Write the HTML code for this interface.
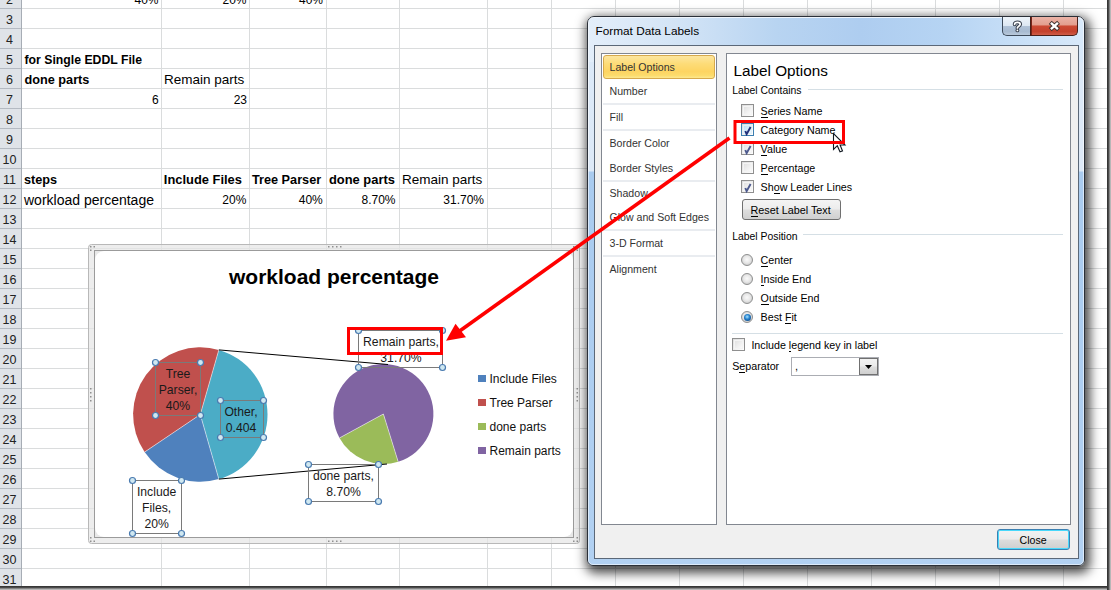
<!DOCTYPE html>
<html><head><meta charset="utf-8"><style>
*{margin:0;padding:0;box-sizing:border-box}
body{width:1111px;height:590px;overflow:hidden;position:relative;background:#fff;font-family:"Liberation Sans",sans-serif;color:#000}
.abs{position:absolute}
#hdr{position:absolute;left:0;top:0;width:21px;height:586px;background:#dfe3e8}
.rn{position:absolute;left:-1.5px;margin-top:2px;width:22px;height:20px;text-align:center;font-size:12.5px;line-height:20px;color:#222}
.t{position:absolute;white-space:nowrap;font-size:13.5px;line-height:20px;margin-top:1px}
.b{font-weight:bold;font-size:12.7px}
.r{text-align:right}
.cl{position:absolute;text-align:center;white-space:nowrap;color:#1a1a1a}

#dlg{position:absolute;left:587px;top:16px;width:498px;height:550px;border:1px solid #2b3038;border-radius:7px 7px 6px 6px;
 background:linear-gradient(180deg,#dbe9f8 0px,#dde9f7 154px,#a9cbef 155px,#b2d1f2 549px);
 box-shadow:2px 4px 11px 3px rgba(0,0,0,0.72)}
#dlg .hl{position:absolute;left:0;top:0;right:0;bottom:0;border:1px solid rgba(255,255,255,0.55);border-radius:6px 6px 5px 5px}
#tbar{position:absolute;left:1px;top:1px;width:494px;height:44px;border-radius:6px 6px 0 0;background:linear-gradient(90deg,#e3eefa 0%,#d3e4f6 18%,#b8d4f1 38%,#aecdf0 55%,#b6d4f3 72%,#c9e0f7 88%,#d8e9fa 100%)}
#ttl{position:absolute;left:595.5px;top:23px;font-size:11.8px;line-height:16px;color:#000;white-space:nowrap}
#client{position:absolute;left:594px;top:45px;width:485px;height:514px;background:#f0f0f0;border:1px solid #5b6878}
.dt{position:absolute;white-space:nowrap;font-size:10.7px;line-height:14px;color:#000}
.li{position:absolute;left:609.5px;white-space:nowrap;font-size:10.6px;line-height:14px;color:#333}
.sep{position:absolute;left:603px;width:112px;height:2px;background:#e9ecf0}
.cb{position:absolute;width:13px;height:13px;border:1px solid #8f8f8f;background:linear-gradient(135deg,#dcdcdc,#ffffff)}
.cb.hot::after{background:linear-gradient(135deg,#bfe0f6,#eef7fd);border-color:#def0fb}
.cb::after{content:"";position:absolute;left:1px;top:1px;right:1px;bottom:1px;border:1px solid #f4f4f4;background:linear-gradient(135deg,#e2e2e2,#fafafa)}
.rb{position:absolute;width:12px;height:12px;border-radius:50%;border:1px solid #8e8f8f;background:radial-gradient(circle at 50% 45%,#fafafa 0%,#e8e8e8 45%,#cfcfcf 75%,#f2f2f2 100%)}
u{text-decoration:none;border-bottom:1px solid currentColor}
</style></head><body>
<div id="hdr"></div>
<svg class="abs" style="left:0;top:0" width="1111" height="590">
<g stroke="#dadcdd" stroke-width="1"><line x1="22" y1="8.5" x2="1107" y2="8.5"/><line x1="22" y1="28.5" x2="1107" y2="28.5"/><line x1="22" y1="48.5" x2="1107" y2="48.5"/><line x1="22" y1="68.5" x2="1107" y2="68.5"/><line x1="22" y1="88.5" x2="1107" y2="88.5"/><line x1="22" y1="108.5" x2="1107" y2="108.5"/><line x1="22" y1="128.5" x2="1107" y2="128.5"/><line x1="22" y1="148.5" x2="1107" y2="148.5"/><line x1="22" y1="168.5" x2="1107" y2="168.5"/><line x1="22" y1="188.5" x2="1107" y2="188.5"/><line x1="22" y1="208.5" x2="1107" y2="208.5"/><line x1="22" y1="228.5" x2="1107" y2="228.5"/><line x1="22" y1="248.5" x2="1107" y2="248.5"/><line x1="22" y1="268.5" x2="1107" y2="268.5"/><line x1="22" y1="288.5" x2="1107" y2="288.5"/><line x1="22" y1="308.5" x2="1107" y2="308.5"/><line x1="22" y1="328.5" x2="1107" y2="328.5"/><line x1="22" y1="348.5" x2="1107" y2="348.5"/><line x1="22" y1="368.5" x2="1107" y2="368.5"/><line x1="22" y1="388.5" x2="1107" y2="388.5"/><line x1="22" y1="408.5" x2="1107" y2="408.5"/><line x1="22" y1="428.5" x2="1107" y2="428.5"/><line x1="22" y1="448.5" x2="1107" y2="448.5"/><line x1="22" y1="468.5" x2="1107" y2="468.5"/><line x1="22" y1="488.5" x2="1107" y2="488.5"/><line x1="22" y1="508.5" x2="1107" y2="508.5"/><line x1="22" y1="528.5" x2="1107" y2="528.5"/><line x1="22" y1="548.5" x2="1107" y2="548.5"/><line x1="22" y1="568.5" x2="1107" y2="568.5"/><line x1="161.5" y1="0" x2="161.5" y2="586"/><line x1="249.5" y1="0" x2="249.5" y2="586"/><line x1="326.5" y1="0" x2="326.5" y2="586"/><line x1="399.5" y1="0" x2="399.5" y2="586"/><line x1="487.5" y1="0" x2="487.5" y2="586"/><line x1="551.5" y1="0" x2="551.5" y2="586"/><line x1="615.5" y1="0" x2="615.5" y2="586"/><line x1="679.5" y1="0" x2="679.5" y2="586"/><line x1="743.5" y1="0" x2="743.5" y2="586"/><line x1="807.5" y1="0" x2="807.5" y2="586"/><line x1="871.5" y1="0" x2="871.5" y2="586"/><line x1="935.5" y1="0" x2="935.5" y2="586"/><line x1="999.5" y1="0" x2="999.5" y2="586"/><line x1="1063.5" y1="0" x2="1063.5" y2="586"/></g>
<g stroke="#b4bac2" stroke-width="1"><line x1="0" y1="8.5" x2="21" y2="8.5"/><line x1="0" y1="28.5" x2="21" y2="28.5"/><line x1="0" y1="48.5" x2="21" y2="48.5"/><line x1="0" y1="68.5" x2="21" y2="68.5"/><line x1="0" y1="88.5" x2="21" y2="88.5"/><line x1="0" y1="108.5" x2="21" y2="108.5"/><line x1="0" y1="128.5" x2="21" y2="128.5"/><line x1="0" y1="148.5" x2="21" y2="148.5"/><line x1="0" y1="168.5" x2="21" y2="168.5"/><line x1="0" y1="188.5" x2="21" y2="188.5"/><line x1="0" y1="208.5" x2="21" y2="208.5"/><line x1="0" y1="228.5" x2="21" y2="228.5"/><line x1="0" y1="248.5" x2="21" y2="248.5"/><line x1="0" y1="268.5" x2="21" y2="268.5"/><line x1="0" y1="288.5" x2="21" y2="288.5"/><line x1="0" y1="308.5" x2="21" y2="308.5"/><line x1="0" y1="328.5" x2="21" y2="328.5"/><line x1="0" y1="348.5" x2="21" y2="348.5"/><line x1="0" y1="368.5" x2="21" y2="368.5"/><line x1="0" y1="388.5" x2="21" y2="388.5"/><line x1="0" y1="408.5" x2="21" y2="408.5"/><line x1="0" y1="428.5" x2="21" y2="428.5"/><line x1="0" y1="448.5" x2="21" y2="448.5"/><line x1="0" y1="468.5" x2="21" y2="468.5"/><line x1="0" y1="488.5" x2="21" y2="488.5"/><line x1="0" y1="508.5" x2="21" y2="508.5"/><line x1="0" y1="528.5" x2="21" y2="528.5"/><line x1="0" y1="548.5" x2="21" y2="548.5"/><line x1="0" y1="568.5" x2="21" y2="568.5"/></g>
<line x1="21.5" y1="0" x2="21.5" y2="586" stroke="#a7adb5"/>
</svg>
<div class="rn" style="top:-12px">2</div><div class="rn" style="top:8px">3</div><div class="rn" style="top:28px">4</div><div class="rn" style="top:48px">5</div><div class="rn" style="top:68px">6</div><div class="rn" style="top:88px">7</div><div class="rn" style="top:108px">8</div><div class="rn" style="top:128px">9</div><div class="rn" style="top:148px">10</div><div class="rn" style="top:168px">11</div><div class="rn" style="top:188px">12</div><div class="rn" style="top:208px">13</div><div class="rn" style="top:228px">14</div><div class="rn" style="top:248px">15</div><div class="rn" style="top:268px">16</div><div class="rn" style="top:288px">17</div><div class="rn" style="top:308px">18</div><div class="rn" style="top:328px">19</div><div class="rn" style="top:348px">20</div><div class="rn" style="top:368px">21</div><div class="rn" style="top:388px">22</div><div class="rn" style="top:408px">23</div><div class="rn" style="top:428px">24</div><div class="rn" style="top:448px">25</div><div class="rn" style="top:468px">26</div><div class="rn" style="top:488px">27</div><div class="rn" style="top:508px">28</div><div class="rn" style="top:528px">29</div><div class="rn" style="top:548px">30</div><div class="rn" style="top:568px">31</div>
<div class="t " style="top:-11px;font-size:12px;left:-41.5px;width:200px;text-align:right;">40%</div>
<div class="t " style="top:-11px;font-size:12px;left:46.5px;width:200px;text-align:right;">20%</div>
<div class="t " style="top:-11px;font-size:12px;left:123px;width:200px;text-align:right;">40%</div>
<div class="t b" style="top:49px;font-size:12.25px;left:24.5px;">for Single EDDL File</div>
<div class="t b" style="top:69px;left:24.5px;">done parts</div>
<div class="t " style="top:69px;left:164px;">Remain parts</div>
<div class="t " style="top:89px;font-size:12px;left:-41.30000000000001px;width:200px;text-align:right;">6</div>
<div class="t " style="top:89px;font-size:12px;left:47px;width:200px;text-align:right;">23</div>
<div class="t b" style="top:169px;left:24px;">steps</div>
<div class="t b" style="top:169px;font-size:12.9px;left:163.8px;">Include Files</div>
<div class="t b" style="top:169px;left:252px;">Tree Parser</div>
<div class="t b" style="top:169px;font-size:12.9px;left:329px;">done parts</div>
<div class="t " style="top:169px;left:402px;">Remain parts</div>
<div class="t " style="top:189px;font-size:14px;left:24px;">workload percentage</div>
<div class="t " style="top:189px;font-size:12px;left:46.400000000000006px;width:200px;text-align:right;">20%</div>
<div class="t " style="top:189px;font-size:12px;left:122.80000000000001px;width:200px;text-align:right;">40%</div>
<div class="t " style="top:189px;font-size:12px;left:195.5px;width:200px;text-align:right;">8.70%</div>
<div class="t " style="top:189px;font-size:12px;left:284px;width:200px;text-align:right;">31.70%</div>
<svg class="abs" style="left:0;top:0" width="1111" height="590">
<rect x="88.5" y="244.5" width="491" height="299" rx="3" fill="#e6e6e6" fill-opacity="0.7" stroke="#b8b8b8"/>
<rect x="328" y="246" width="1.5" height="1.5" fill="#909090"/><rect x="332" y="246" width="1.5" height="1.5" fill="#909090"/><rect x="336" y="246" width="1.5" height="1.5" fill="#909090"/><rect x="340" y="246" width="1.5" height="1.5" fill="#909090"/><rect x="328" y="540.5" width="1.5" height="1.5" fill="#909090"/><rect x="332" y="540.5" width="1.5" height="1.5" fill="#909090"/><rect x="336" y="540.5" width="1.5" height="1.5" fill="#909090"/><rect x="340" y="540.5" width="1.5" height="1.5" fill="#909090"/><rect x="90" y="388" width="1.5" height="1.5" fill="#909090"/><rect x="90" y="392" width="1.5" height="1.5" fill="#909090"/><rect x="90" y="396" width="1.5" height="1.5" fill="#909090"/><rect x="90" y="400" width="1.5" height="1.5" fill="#909090"/><rect x="576.5" y="388" width="1.5" height="1.5" fill="#909090"/><rect x="576.5" y="392" width="1.5" height="1.5" fill="#909090"/><rect x="576.5" y="396" width="1.5" height="1.5" fill="#909090"/><rect x="576.5" y="400" width="1.5" height="1.5" fill="#909090"/><rect x="90" y="246" width="1.5" height="1.5" fill="#909090"/><rect x="93.5" y="246" width="1.5" height="1.5" fill="#909090"/><rect x="90" y="249.5" width="1.5" height="1.5" fill="#909090"/><rect x="576.5" y="540.5" width="1.5" height="1.5" fill="#909090"/><rect x="573" y="540.5" width="1.5" height="1.5" fill="#909090"/><rect x="576.5" y="537" width="1.5" height="1.5" fill="#909090"/><rect x="576.5" y="246" width="1.5" height="1.5" fill="#909090"/><rect x="573" y="246" width="1.5" height="1.5" fill="#909090"/><rect x="576.5" y="249.5" width="1.5" height="1.5" fill="#909090"/><rect x="90" y="540.5" width="1.5" height="1.5" fill="#909090"/><rect x="93.5" y="540.5" width="1.5" height="1.5" fill="#909090"/><rect x="90" y="537" width="1.5" height="1.5" fill="#909090"/><rect x="94.5" y="250.5" width="479" height="287" fill="#e8e8e8" stroke="#9b9b9b"/>
<rect x="95" y="251" width="478" height="286" rx="9" fill="#fff"/>
<path d="M200.3,414.5 L218.82,349.90 A67.2,67.2 0 0 1 218.82,479.10 Z" fill="#4bacc6"/><path d="M200.3,414.5 L218.82,479.10 A67.2,67.2 0 0 1 144.59,452.08 Z" fill="#4f81bd"/><path d="M200.3,414.5 L144.59,452.08 A67.2,67.2 0 0 1 218.82,349.90 Z" fill="#c0504d"/><path d="M383.4,414 L398.19,461.76 A50,50 0 0 1 339.50,437.93 Z" fill="#9bbb59"/><path d="M383.4,414 L339.50,437.93 A50,50 0 1 1 398.19,461.76 Z" fill="#8064a2"/><line x1="200.3" y1="414.5" x2="218.82" y2="349.90" stroke="#ffffff" stroke-opacity="0.5" stroke-width="1"/><line x1="200.3" y1="414.5" x2="218.82" y2="479.10" stroke="#ffffff" stroke-opacity="0.5" stroke-width="1"/><line x1="200.3" y1="414.5" x2="144.59" y2="452.08" stroke="#ffffff" stroke-opacity="0.5" stroke-width="1"/><line x1="383.4" y1="414" x2="398.19" y2="461.76" stroke="#ffffff" stroke-opacity="0.5" stroke-width="1"/><line x1="383.4" y1="414" x2="339.50" y2="437.93" stroke="#ffffff" stroke-opacity="0.5" stroke-width="1"/><line x1="218.82" y1="349.90" x2="388" y2="364.5" stroke="#000" stroke-width="1"/><line x1="218.82" y1="479.10" x2="387" y2="464" stroke="#000" stroke-width="1"/><rect x="155.5" y="362.5" width="45.0" height="53.0" fill="none" stroke="#7a7a7a" stroke-width="1"/><circle cx="155.5" cy="362.5" r="3" fill="#d0e8f1" stroke="#4a7bb0" stroke-width="1.2"/><circle cx="200.5" cy="362.5" r="3" fill="#d0e8f1" stroke="#4a7bb0" stroke-width="1.2"/><circle cx="155.5" cy="415.5" r="3" fill="#d0e8f1" stroke="#4a7bb0" stroke-width="1.2"/><circle cx="200.5" cy="415.5" r="3" fill="#d0e8f1" stroke="#4a7bb0" stroke-width="1.2"/><rect x="220.5" y="400.5" width="43.0" height="37.0" fill="none" stroke="#7a7a7a" stroke-width="1"/><circle cx="220.5" cy="400.5" r="3" fill="#d0e8f1" stroke="#4a7bb0" stroke-width="1.2"/><circle cx="263.5" cy="400.5" r="3" fill="#d0e8f1" stroke="#4a7bb0" stroke-width="1.2"/><circle cx="220.5" cy="437.5" r="3" fill="#d0e8f1" stroke="#4a7bb0" stroke-width="1.2"/><circle cx="263.5" cy="437.5" r="3" fill="#d0e8f1" stroke="#4a7bb0" stroke-width="1.2"/><rect x="132.5" y="480.5" width="49.0" height="53.0" fill="none" stroke="#7a7a7a" stroke-width="1"/><circle cx="132.5" cy="480.5" r="3" fill="#d0e8f1" stroke="#4a7bb0" stroke-width="1.2"/><circle cx="181.5" cy="480.5" r="3" fill="#d0e8f1" stroke="#4a7bb0" stroke-width="1.2"/><circle cx="132.5" cy="533.5" r="3" fill="#d0e8f1" stroke="#4a7bb0" stroke-width="1.2"/><circle cx="181.5" cy="533.5" r="3" fill="#d0e8f1" stroke="#4a7bb0" stroke-width="1.2"/><rect x="308.5" y="464.5" width="70.0" height="37.0" fill="none" stroke="#7a7a7a" stroke-width="1"/><circle cx="308.5" cy="464.5" r="3" fill="#d0e8f1" stroke="#4a7bb0" stroke-width="1.2"/><circle cx="378.5" cy="464.5" r="3" fill="#d0e8f1" stroke="#4a7bb0" stroke-width="1.2"/><circle cx="308.5" cy="501.5" r="3" fill="#d0e8f1" stroke="#4a7bb0" stroke-width="1.2"/><circle cx="378.5" cy="501.5" r="3" fill="#d0e8f1" stroke="#4a7bb0" stroke-width="1.2"/><rect x="358.5" y="330.5" width="84.0" height="37.0" fill="none" stroke="#7a7a7a" stroke-width="1"/><circle cx="358.5" cy="330.5" r="3" fill="#d0e8f1" stroke="#4a7bb0" stroke-width="1.2"/><circle cx="442.5" cy="330.5" r="3" fill="#d0e8f1" stroke="#4a7bb0" stroke-width="1.2"/><circle cx="358.5" cy="367.5" r="3" fill="#d0e8f1" stroke="#4a7bb0" stroke-width="1.2"/><circle cx="442.5" cy="367.5" r="3" fill="#d0e8f1" stroke="#4a7bb0" stroke-width="1.2"/><rect x="478" y="375" width="8" height="7" fill="#4f81bd"/><rect x="478" y="399" width="8" height="7" fill="#c0504d"/><rect x="478" y="423" width="8" height="7" fill="#9bbb59"/><rect x="478" y="447" width="8" height="7" fill="#8064a2"/>
</svg><div class="abs" style="left:200px;top:264px;width:268px;text-align:center;font-weight:bold;font-size:21px;line-height:26px;white-space:nowrap">workload percentage</div><div class="cl" style="left:118.0px;top:366px;width:120px;font-size:12.2px;line-height:16px">Tree<br>Parser,<br>40%</div><div class="cl" style="left:181.0px;top:404px;width:120px;font-size:12.2px;line-height:16px">Other,<br>0.404</div><div class="cl" style="left:96.6px;top:484px;width:120px;font-size:12.2px;line-height:16px">Include<br>Files,<br>20%</div><div class="cl" style="left:283.5px;top:468px;width:120px;font-size:12.2px;line-height:16px">done parts,<br>8.70%</div><div class="cl" style="left:341.0px;top:334px;width:120px;font-size:12.2px;line-height:16px">Remain parts,<br>31.70%</div><div class="abs" style="left:489.5px;top:371px;font-size:12px;line-height:16px;white-space:nowrap;color:#111">Include Files</div><div class="abs" style="left:489.5px;top:395px;font-size:12px;line-height:16px;white-space:nowrap;color:#111">Tree Parser</div><div class="abs" style="left:489.5px;top:419px;font-size:12px;line-height:16px;white-space:nowrap;color:#111">done parts</div><div class="abs" style="left:489.5px;top:443px;font-size:12px;line-height:16px;white-space:nowrap;color:#111">Remain parts</div>
<div id="dlg"><div id="tbar"></div><div class="hl"></div></div>
<div class="dt" style="left:595.5px;top:23.91px;font-size:11.8px;">Format Data Labels</div>
<div class="abs" style="left:1002px;top:17px;width:29px;height:19px;border:1px solid #3d4a5a;border-top:none;border-right:none;border-radius:0 0 0 5px;background:linear-gradient(180deg,#eef4fa 0%,#dde8f3 48%,#b1c3d8 51%,#a7bad0 80%,#b9c9db 100%)">
<svg style="position:absolute;left:9px;top:3px" width="12" height="14"><path d="M2.6 4.3 C2.6 1.6 8.2 1.6 8.2 4.3 C8.2 6.2 5.4 6.2 5.4 8" fill="none" stroke="#3b4350" stroke-width="3.8" stroke-linecap="round"/><circle cx="5.4" cy="10.4" r="1.9" fill="#3b4350"/><path d="M2.6 4.3 C2.6 1.6 8.2 1.6 8.2 4.3 C8.2 6.2 5.4 6.2 5.4 8" fill="none" stroke="#fff" stroke-width="1.7" stroke-linecap="round"/><circle cx="5.4" cy="10.4" r="0.9" fill="#fff"/></svg></div>
<div class="abs" style="left:1030px;top:17px;width:48px;height:19px;border:1px solid #4a1f18;border-top:none;border-radius:0 0 5px 0;background:linear-gradient(180deg,#ebb3a7 0%,#e39e8e 44%,#cc4a34 50%,#c4412c 80%,#cf5c47 100%);box-shadow:inset 1px 0 0 #7a2418">
<svg style="position:absolute;left:17px;top:2px" width="16" height="16"><path d="M2.2 3.4 L10.6 10.6 M10.6 3.4 L2.2 10.6" stroke="#3f3230" stroke-width="4.4" stroke-linecap="butt"/><path d="M2.9 3.9 L9.9 10.1 M9.9 3.9 L2.9 10.1" stroke="#ffffff" stroke-width="2.4" stroke-linecap="butt"/></svg></div>
<div id="client"></div>
<div class="abs" style="left:601px;top:53px;width:116px;height:472px;background:#fff;border:1px solid #828790"></div>
<div class="abs" style="left:603px;top:55px;width:112px;height:24px;border:1px solid #d6a94c;border-radius:3px;background:linear-gradient(180deg,#fde6a0 0%,#fddc78 35%,#fdd462 70%,#fcdb6c 88%,#fde88e 100%)"></div>
<div class="li" style="left:609.5px;top:60.33px;font-size:10.6px;">Label Options</div>
<div class="li" style="left:609.5px;top:84.33px;font-size:10.6px;">Number</div>
<div class="li" style="left:609.5px;top:110.33px;font-size:10.6px;">Fill</div>
<div class="li" style="left:609.5px;top:136.33px;font-size:10.6px;">Border Color</div>
<div class="li" style="left:609.5px;top:160.83px;font-size:10.6px;">Border Styles</div>
<div class="li" style="left:609.5px;top:186.33px;font-size:10.6px;">Shadow</div>
<div class="li" style="left:609.5px;top:210.33px;font-size:10.6px;">Glow and Soft Edges</div>
<div class="li" style="left:609.5px;top:236.33px;font-size:10.6px;">3-D Format</div>
<div class="li" style="left:609.5px;top:262.33px;font-size:10.6px;">Alignment</div>
<div class="sep" style="top:103px"></div>
<div class="sep" style="top:129px"></div>
<div class="sep" style="top:180px"></div>
<div class="sep" style="top:229px"></div>
<div class="sep" style="top:255px"></div>
<div class="abs" style="left:726px;top:53px;width:345px;height:472px;background:#fff;border:1px solid #828790"></div>
<div class="dt" style="left:733.5px;top:63.70px;font-size:15.3px;">Label Options</div>
<div class="dt" style="left:732.2px;top:84.00px;font-size:10.4px;">Label Contains</div>
<div class="abs" style="left:808px;top:89px;width:255px;height:1px;background:#d5dfe5"></div>
<div class="cb" style="left:741px;top:104px;"></div>
<div class="dt" style="left:760.6px;top:104.29px;font-size:10.7px;"><u>S</u>eries Name</div>
<div class="cb hot" style="left:741px;top:123px;border-color:#3c7fb1;"><svg style="position:absolute;left:1px;top:1px;z-index:2" width="11" height="11"><path d="M2.3 6.0 L3.6 9.2 L7.6 2.0" stroke="#20307a" stroke-width="1.9" fill="none"/></svg></div>
<div class="dt" style="left:760.6px;top:123.29px;font-size:10.7px;">Category Name</div>
<div class="cb" style="left:741px;top:142px;"><svg style="position:absolute;left:1px;top:1px;z-index:2" width="11" height="11"><path d="M2.3 6.0 L3.6 9.2 L7.6 2.0" stroke="#4d5a8e" stroke-width="1.9" fill="none"/></svg></div>
<div class="dt" style="left:760.6px;top:142.29px;font-size:10.7px;"><u>V</u>alue</div>
<div class="cb" style="left:741px;top:161px;"></div>
<div class="dt" style="left:760.6px;top:161.29px;font-size:10.7px;"><u>P</u>ercentage</div>
<div class="cb" style="left:741px;top:180px;"><svg style="position:absolute;left:1px;top:1px;z-index:2" width="11" height="11"><path d="M2.3 6.0 L3.6 9.2 L7.6 2.0" stroke="#4d5a8e" stroke-width="1.9" fill="none"/></svg></div>
<div class="dt" style="left:760.6px;top:180.29px;font-size:10.7px;">Sh<u>o</u>w Leader Lines</div>
<div class="abs" style="left:742px;top:199px;width:99px;height:21px;border:1px solid #707070;border-radius:3px;background:linear-gradient(180deg,#f4f4f4 0%,#ececec 48%,#dedede 52%,#d0d0d0 100%)"></div>
<div class="dt" style="left:750.5px;top:203.46px;font-size:10.8px;"><u>R</u>eset Label Text</div>
<div class="dt" style="left:732.2px;top:229.60px;font-size:10.4px;">Label Position</div>
<div class="abs" style="left:803px;top:234px;width:260px;height:1px;background:#d5dfe5"></div>
<div class="rb" style="left:741px;top:253.7px"></div>
<div class="dt" style="left:760.6px;top:252.99px;font-size:10.7px;"><u>C</u>enter</div>
<div class="rb" style="left:741px;top:272.9px"></div>
<div class="dt" style="left:760.6px;top:272.19px;font-size:10.7px;"><u>I</u>nside End</div>
<div class="rb" style="left:741px;top:292.1px"></div>
<div class="dt" style="left:760.6px;top:291.39px;font-size:10.7px;"><u>O</u>utside End</div>
<div class="rb" style="left:741px;top:311.0px"></div>
<div class="dt" style="left:760.6px;top:310.29px;font-size:10.7px;">Best <u>F</u>it</div>
<div class="abs" style="left:743.5px;top:313.5px;width:7px;height:7px;border-radius:50%;background:radial-gradient(circle at 45% 40%,#a8e4ff 0%,#2a86d0 40%,#0d4a8a 80%,#0a3466 100%)"></div>
<div class="abs" style="left:732px;top:333px;width:331px;height:1px;background:#d5dfe5"></div>
<div class="cb" style="left:732px;top:338px;"></div>
<div class="dt" style="left:751.4px;top:337.79px;font-size:10.7px;">Include <u>l</u>egend key in label</div>
<div class="dt" style="left:732.2px;top:359.29px;font-size:10.7px;">S<u>e</u>parator</div>
<div class="abs" style="left:791px;top:357px;width:88px;height:19px;border:1px solid #abadb3;background:#fff"></div>
<div class="abs" style="left:795px;top:358px;font-size:11px;line-height:16px">,</div>
<div class="abs" style="left:859px;top:358px;width:19px;height:17px;border:1px solid #707070;background:linear-gradient(180deg,#f2f2f2,#ebebeb 45%,#dddddd 55%,#cfcfcf)">
<svg style="position:absolute;left:5px;top:6px" width="8" height="5"><path d="M0 0 L7 0 L3.5 4 Z" fill="#000"/></svg></div>
<div class="abs" style="left:997px;top:529px;width:73px;height:21px;border:1px solid #3c7fb1;border-radius:3px;box-shadow:inset 0 0 0 1px #48d8fb;background:linear-gradient(180deg,#f2f2f2 0%,#ebebeb 48%,#dddddd 52%,#cfcfcf 100%)"></div>
<div class="dt" style="left:1019.5px;top:533.3px;font-size:10.6px;">Close</div>
<svg class="abs" style="left:0;top:0" width="1111" height="590">
<rect x="348.5" y="328.5" width="93" height="25" fill="none" stroke="#ff0000" stroke-width="3"/>
<path d="M833.5,133.5 L833.5,149.5 L837.3,145.7 L840,151.8 L842.5,151 L840.1,145 L845,145 Z" fill="#fff" stroke="#101820" stroke-width="1.1" stroke-linejoin="miter"/>
<rect x="735" y="121.5" width="108.5" height="21" fill="none" stroke="#ff0000" stroke-width="3"/>
<line x1="729.5" y1="138" x2="459" y2="331.5" stroke="#ff0000" stroke-width="3.6"/>
<path d="M446,340.8 L455.5,323.8 L466,337.2 Z" fill="#ff0000"/>
</svg>
<div class="abs" style="left:0;top:586px;width:1111px;height:4px;background:linear-gradient(180deg,#2e2e2e 0%,#454545 35%,#8a8a8a 65%,#d0d0d0 100%)"></div>
<div class="abs" style="left:1107px;top:0;width:4px;height:590px;background:linear-gradient(90deg,#2e2e2e 0%,#454545 35%,#8a8a8a 65%,#d0d0d0 100%)"></div>
</body></html>
